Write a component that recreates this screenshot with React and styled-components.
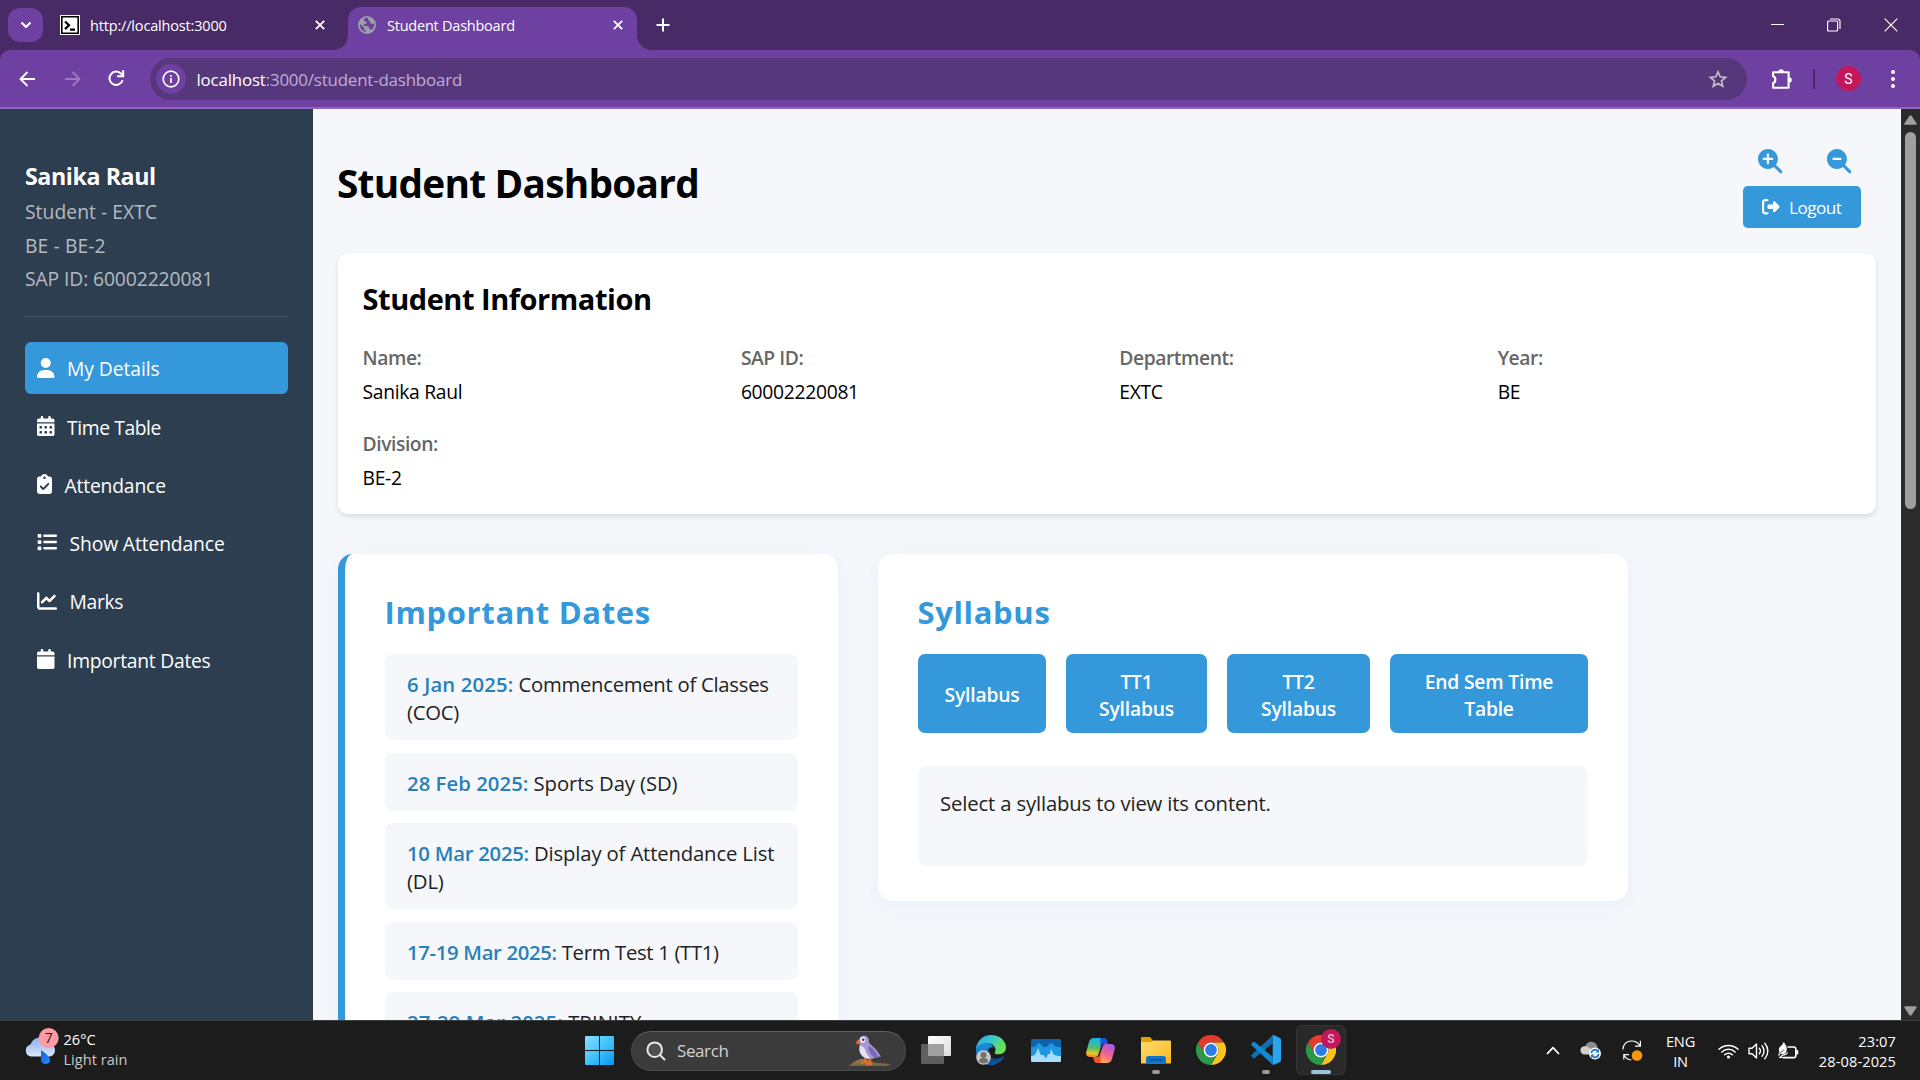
import React from "react";
import styled, { createGlobalStyle, css } from "styled-components";
import {
  FaUser,
  FaCalendarDays,
  FaClipboardCheck,
  FaList,
  FaChartLine,
  FaCalendar,
  FaMagnifyingGlassPlus,
  FaMagnifyingGlassMinus,
  FaRightFromBracket,
} from "react-icons/fa6";

const c = {
  frame: "#472a66",
  tab: "#6e40a1",
  omnibox: "#57377b",
  sidebar: "#2d3e50",
  page: "#f5f7fb",
  blue: "#3498db",
  deepBlue: "#2980b9",
};

const GlobalStyle = createGlobalStyle`
  *, *::before, *::after { box-sizing: border-box; }
  body {
    margin: 0;
    overflow: hidden;
    font-family: "Open Sans", "Noto Sans", sans-serif;
  }
  svg { display: block; flex: none; }
`;

const Screen = styled.div`
  width: 1920px;
  height: 1080px;
  display: flex;
  flex-direction: column;
  overflow: hidden;
  background: ${c.frame};
`;

/* ---------- browser chrome ---------- */

const TabStrip = styled.div`
  height: 50px;
  flex: none;
  display: flex;
  align-items: center;
  padding-left: 8px;
  color: #fff;
`;

const TabSearch = styled.div`
  width: 35px;
  height: 34px;
  border-radius: 12px;
  background: ${c.tab};
  display: grid;
  place-items: center;
`;

const Tab = styled.div`
  position: relative;
  height: 43px;
  margin-top: 7px;
  display: flex;
  align-items: center;
  padding: 0 14px 7px 10px;
  width: ${(p) => p.$width}px;
  margin-left: ${(p) => p.$gap}px;
  ${(p) =>
    p.$active &&
    css`
      background: ${c.tab};
      border-radius: 13px 13px 0 0;
      &::before,
      &::after {
        content: "";
        position: absolute;
        bottom: 0;
        width: 14px;
        height: 14px;
      }
      &::before {
        left: -14px;
        background: radial-gradient(circle at 0 0, transparent 13.5px, ${c.tab} 14px);
      }
      &::after {
        right: -14px;
        background: radial-gradient(circle at 100% 0, transparent 13.5px, ${c.tab} 14px);
      }
    `}
`;

const TabTitle = styled.span`
  flex: 1;
  margin-left: ${(p) => p.$indent}px;
  padding-top: 1px;
  font-size: 14.5px;
  line-height: 20px;
  letter-spacing: ${(p) => p.$track}px;
  white-space: nowrap;
`;

const NewTab = styled.div`
  margin-left: 19px;
`;

const WindowButtons = styled.div`
  margin-left: auto;
  display: flex;
  align-items: center;
  gap: 43px;
  padding-right: 22px;
`;

const Toolbar = styled.div`
  height: 59px;
  flex: none;
  display: flex;
  align-items: center;
  background: ${c.tab};
  border-radius: 10px 10px 0 0;
  border-bottom: 2px solid #8f66bd;
  color: #fff;
`;

const NavButtons = styled.div`
  width: 150px;
  flex: none;
  display: flex;
  gap: 25px;
  padding-left: 17px;
`;

const Omnibox = styled.div`
  width: 1597px;
  height: 42px;
  flex: none;
  display: flex;
  align-items: center;
  border-radius: 21px;
  background: ${c.omnibox};
  padding: 0 19px 0 6px;
`;

const SiteInfo = styled.div`
  width: 30px;
  height: 30px;
  border-radius: 50%;
  background: ${c.tab};
  display: grid;
  place-items: center;
`;

const Url = styled.span`
  flex: 1;
  margin-left: 10.5px;
  font-size: 16.9px;
  line-height: 24px;
  letter-spacing: -0.18px;
  color: #bfadd3;
  padding-top: 2px;
`;

const UrlHost = styled.span`
  color: #fff;
`;

const ToolbarActions = styled.div`
  flex: 1;
  display: flex;
  align-items: center;
  padding-left: 24px;
`;

const ToolbarDivider = styled.div`
  width: 2px;
  height: 20px;
  margin: 0 21px 0 19px;
  background: ${c.frame};
`;

const Avatar = styled.div`
  width: 25px;
  height: 25px;
  border-radius: 50%;
  background: #c2185b;
  font: 400 14px/26px Roboto, sans-serif;
  text-align: center;
  margin-right: 30px;
`;

/* ---------- page ---------- */

const Viewport = styled.div`
  flex: 1;
  min-height: 0;
  display: flex;
  overflow: hidden;
  background: ${c.page};
`;

const Sidebar = styled.aside`
  width: 313px;
  flex: none;
  padding: 51px 25px 0;
  background: ${c.sidebar};
`;

const Profile = styled.div`
  padding-bottom: 20.25px;
  border-bottom: 1px solid #42515f;
  margin-bottom: 25px;
`;

const ProfileName = styled.h3`
  margin: 0 0 3.25px;
  font-size: 23.2px;
  line-height: 32px;
  font-weight: 700;
  letter-spacing: -0.4px;
  color: #fff;
`;

const ProfileLine = styled.p`
  margin: 0;
  font-size: 19.3px;
  line-height: 33.5px;
  letter-spacing: ${(p) => p.$track}px;
  color: #b3bbc1;
`;

const Menu = styled.nav`
  display: flex;
  flex-direction: column;
  gap: 6.25px;
`;

const MenuItem = styled.a`
  height: 52px;
  display: flex;
  align-items: center;
  gap: 12.5px;
  padding-left: 12px;
  border-radius: 6px;
  background: ${(p) => (p.$active ? c.blue : "transparent")};
  color: #fff;
  font-size: 19.3px;
  letter-spacing: ${(p) => p.$track}px;
  svg {
    height: 20px;
    width: ${(p) => p.$icon}px;
    margin-bottom: 1px;
  }
  span {
    line-height: 28px;
    padding-top: 2.5px;
  }
`;

const Main = styled.main`
  width: 1588px;
  flex: none;
  padding: 29px 25px 0;
`;

const Header = styled.header`
  height: 90px;
  display: flex;
  justify-content: space-between;
  align-items: center;
  padding-right: 15px;
  margin-bottom: 25px;
`;

const PageTitle = styled.h1`
  margin: 0 0 0 -1px;
  font-size: 38.8px;
  line-height: 54px;
  font-weight: 700;
  letter-spacing: -0.75px;
  color: #000;
`;

const HeaderActions = styled.div`
  width: 118px;
  align-self: flex-start;
  padding-top: 11px;
`;

const ZoomControls = styled.div`
  display: flex;
  justify-content: space-between;
  padding: 0 10px 0 14.5px;
  margin-bottom: 13px;
  color: ${c.blue};
  font-size: 24.5px;
  height: 24px;
`;

const LogoutButton = styled.button`
  width: 118px;
  height: 42px;
  border: 0;
  border-radius: 5px;
  display: flex;
  align-items: center;
  gap: 9.5px;
  padding: 0 0 0 19px;
  background: ${c.blue};
  color: #fff;
  font-family: inherit;
  font-size: 17.2px;
  letter-spacing: -0.55px;
`;

const InfoCard = styled.section`
  height: 261px;
  padding: 25px 25px 25px 24.5px;
  border-radius: 10px;
  background: #fff;
  box-shadow: 0 2.5px 5px rgba(0, 0, 0, 0.1);
`;

const InfoTitle = styled.h2`
  margin: 0 0 24px;
  font-size: 29px;
  line-height: 42px;
  font-weight: 700;
  letter-spacing: -0.46px;
`;

const InfoGrid = styled.dl`
  margin: 0;
  display: grid;
  grid-template-columns: repeat(4, 1fr);
  gap: 25.5px 25px;
`;

const InfoItem = styled.div`
  font-size: 19.3px;
  line-height: 27px;
`;

const InfoLabel = styled.dt`
  font-weight: 600;
  color: #666;
  letter-spacing: -0.43px;
  margin-bottom: 6.5px;
`;

const InfoValue = styled.dd`
  margin: 0;
  color: #000;
  letter-spacing: -0.3px;
`;

const Panels = styled.div`
  display: flex;
  align-items: flex-start;
  gap: 40px;
  margin-top: 40px;
`;

const Panel = styled.section`
  width: ${(p) => p.$width}px;
  padding: 36px 40px 35px;
  border-left: ${(p) => (p.$accent ? `7px solid ${c.blue}` : "0")};
  border-radius: 15px;
  background: #fff;
  box-shadow: 0 5px 20px rgba(52, 152, 219, 0.07);
`;

const PanelTitle = styled.h2`
  margin: 0 0 20px -0.5px;
  font-size: 31px;
  line-height: 44px;
  font-weight: 700;
  letter-spacing: ${(p) => p.$track}px;
  color: ${c.blue};
`;

const DateItem = styled.div`
  margin-bottom: 12.5px;
  padding: 16px 12px 14px 22px;
  border-radius: 8px;
  background: ${c.page};
  color: #222;
  font-size: 20.3px;
  line-height: 28px;
  letter-spacing: ${(p) => p.$track}px;
`;

const DateLabel = styled.b`
  font-weight: 600;
  color: ${c.deepBlue};
  letter-spacing: ${(p) => p.$track}px;
`;

const SyllabusTabs = styled.div`
  display: grid;
  grid-template-columns: 128fr 141fr 143fr 198fr;
  gap: 20px;
`;

const SyllabusButton = styled.button`
  height: 79px;
  border: 0;
  border-radius: 7px;
  padding: 2px 20px 0;
  background: ${c.blue};
  color: #fff;
  font-family: inherit;
  font-size: 19.3px;
  font-weight: 600;
  line-height: 27px;
  letter-spacing: -0.2px;
`;

const SyllabusContent = styled.div`
  height: 100px;
  margin-top: 33px;
  padding: 23px 22px;
  border-radius: 8px;
  background: ${c.page};
  color: #222;
  font-size: 20.3px;
  line-height: 28px;
  letter-spacing: -0.15px;
`;

const ScrollTrack = styled.div`
  width: 19px;
  flex: none;
  display: flex;
  flex-direction: column;
  align-items: center;
  padding: 6px 0 4px;
  background: #2b2b2b;
`;

const ScrollThumb = styled.div`
  width: 11px;
  height: 377px;
  margin: 7px 0 auto;
  border-radius: 6px;
  background: #9f9f9f;
`;

/* ---------- taskbar ---------- */

const Taskbar = styled.footer`
  height: 60px;
  flex: none;
  display: flex;
  align-items: stretch;
  background: #1c1c1c;
  border-top: 1px solid #3e3e3e;
  color: #fff;
`;

const Weather = styled.div`
  width: 572px;
  flex: none;
  display: flex;
  gap: 3.5px;
  padding: 5px 0 0 24px;
`;

const WeatherText = styled.div`
  padding-top: 3px;
  font-size: 14.6px;
  line-height: 20px;
  color: #fff;
  span {
    display: block;
    color: #c8c8c8;
  }
`;

const TaskCell = styled.div`
  position: relative;
  width: 55px;
  display: grid;
  place-items: center;
  padding-bottom: 1px;
`;

const ActiveTile = styled.div`
  width: 50px;
  height: 50px;
  border-radius: 6px;
  border: 1px solid #363636;
  background: #292929;
  display: grid;
  place-items: center;
`;

const RunningMark = styled.i`
  position: absolute;
  bottom: 6px;
  left: 50%;
  transform: translateX(-50%);
  height: 4px;
  border-radius: 2px;
  width: ${(p) => (p.$active ? 20 : 8)}px;
  background: ${(p) => (p.$active ? "#98c5dc" : "#9a9a9a")};
`;

const ProfileBadge = styled.div`
  position: absolute;
  left: 28px;
  top: 8px;
  width: 20px;
  height: 20px;
  border-radius: 50%;
  background: #c2185b;
  color: #f3b9cf;
  font: 500 12px/20px Roboto, sans-serif;
  text-align: center;
`;

const SearchBox = styled.div`
  width: 275px;
  height: 40px;
  align-self: center;
  margin: 0 2px 0 4px;
  display: flex;
  align-items: center;
  padding: 0 13px 0 14px;
  border-radius: 20px;
  background: #3b3b3b;
  border: 1px solid #4a4a4a;
  border-top-color: #5e5e5e;
`;

const SearchLabel = styled.span`
  flex: 1;
  margin-left: 11px;
  font-size: 17px;
  letter-spacing: -0.4px;
  color: #d2d2d2;
`;

const Tray = styled.div`
  margin-left: auto;
  display: flex;
  align-items: center;
  padding-right: 24px;
`;

const TrayIcons = styled.div`
  display: flex;
  align-items: center;
  gap: ${(p) => p.$gap}px;
`;

const TrayText = styled.div`
  width: ${(p) => p.$width}px;
  font-size: 14.6px;
  line-height: 20px;
  text-align: ${(p) => p.$align};
  letter-spacing: ${(p) => p.$track}px;
`;

/* ---------- drawings ---------- */

const Line = ({ w = 20, h = w, box, sw = 2, d, color = "currentColor", cap = "butt", children }) => (
  <svg width={w} height={h} viewBox={box || `0 0 ${w} ${h}`} fill="none" stroke={color} strokeWidth={sw} strokeLinecap={cap} strokeLinejoin="round">
    {d && <path d={d} />}
    {children}
  </svg>
);

const CloseX = () => <Line w={10} sw={1.8} d="M.8.8l8.400 8.400M9.200.8L.8 9.200" />;

const Terminal = () => (
  <svg width="20" height="20" viewBox="0 0 20 20">
    <path fill="#fff" d="M0 0h20v20H0z" />
    <path fill="none" stroke="#000" strokeWidth="1.6" d="M1.8 1.8h16.4v16.4H1.8z" />
    <path fill="none" stroke="#000" strokeWidth="2.2" d="M5 6.5l4 3.8-4 3.8M10 14.6h5" />
  </svg>
);

const Globe = () => (
  <svg width="18" height="18" viewBox="0 0 18 18">
    <circle cx="9" cy="9" r="9" fill="#9aa0a6" />
    <path
      fill={c.tab}
      d="M10.2 1.8c-1.300-.2-2.700 0-3.900.6l-.4 1.700c0 .8.7 1.500 1.600 1.500h.9v1.700c0 .5-.4.900-.9.900H5.700v1.800h3.900c.7 0 1.300.6 1.300 1.300v1.700h.7c.8 0 1.500.5 1.700 1.200 1.800-1.500 2.900-3.500 2.900-5.700 0-.6-.1-1.100-.2-1.600-.8.800-1.700 1-2.600.8-.9-.2-1.300-1-1.300-1.900 0-.7-.5-1.200-1.200-1.200l-.8-.1zM1.900 7.700c-.5 3.700 2 7.400 5.800 8.300v-1.600c-1 0-1.700-.8-1.700-1.700v-.900z"
    />
  </svg>
);

const Reload = () => (
  <svg width="19" height="19" viewBox="0 0 19 19" fill="none" stroke="currentColor" strokeWidth="2">
    <path d="M15.600 11.200A6.700 6.700 0 1 1 14.300 4.900L16 6.700" />
    <path fill="currentColor" stroke="none" d="M17.200 1.200v7.100h-7.100V6.200h5V1.200z" />
  </svg>
);

const Puzzle = () => (
  <svg width="23" height="22" viewBox="0 0 23 22" fill="none" stroke="currentColor" strokeWidth="2.100" strokeLinejoin="round">
    <path d="M2.100 4.200h15.500v15.500H2.100v-4.600c3-.9 3-6 0-6.900z" />
    <path fill="currentColor" stroke="none" d="M7.300 4a2.800 2.800 0 0 1 5.600 0zM18 9.200a2.800 2.800 0 0 1 0 5.600z" />
  </svg>
);

const CloudRain = () => (
  <svg width="36" height="44" viewBox="0 0 36 44">
    <defs>
      <linearGradient id="cloud" x1="0" y1="0" x2="0" y2="1">
        <stop offset="0" stopColor="#8fb1ee" />
        <stop offset="1" stopColor="#d9e6fb" />
      </linearGradient>
      <linearGradient id="drop" x1="0" y1="0" x2="1" y2="1">
        <stop offset="0" stopColor="#1f5fd6" />
        <stop offset="1" stopColor="#1c8dff" />
      </linearGradient>
    </defs>
    <path fill="url(#cloud)" d="M7 30.500a6 6 0 0 1-.5-11.800C8.500 13 13 11 17 11.500c5 .3 7 3.500 8 6.500 4 .3 6 3 6 6.200 0 3.500-2.500 6.300-6 6.300z" />
    <path fill="none" stroke="#a3bdee" strokeWidth="1.200" d="M6.500 18.900c4-.8 7 1.100 8 3.600" />
    <path fill="url(#drop)" d="M17 24c4 3 9 6.500 9 10.200 0 2.600-2 3.800-4.500 3.800S17 36.500 17 34z" />
    <circle cx="24.700" cy="12" r="10" fill="#ff99a4" />
    <text x="24.700" y="17" textAnchor="middle" fontSize="14" fill="#1c1c1c">7</text>
  </svg>
);

const WindowsLogo = () => (
  <svg width="29" height="29" viewBox="0 0 29 29">
    <defs>
      <linearGradient id="win" x1="0" y1="0" x2="1" y2="1">
        <stop offset="0" stopColor="#8adffc" />
        <stop offset=".5" stopColor="#40c4fb" />
        <stop offset="1" stopColor="#0a93f8" />
      </linearGradient>
    </defs>
    <path fill="url(#win)" d="M1 0h13v14H0V1a1 1 0 0 1 1-1zM15 0h13a1 1 0 0 1 1 1v13H15zM0 15h14v14H1a1 1 0 0 1-1-1zM15 15h14v13a1 1 0 0 1-1 1H15z" />
  </svg>
);

const Puffin = () => (
  <svg width="44" height="32" viewBox="0 0 44 32">
    <defs>
      <linearGradient id="rock" x1="0" y1="0" x2="0" y2="1">
        <stop offset="0" stopColor="#94814f" />
        <stop offset="1" stopColor="#7a643c" />
      </linearGradient>
    </defs>
    <path fill="url(#rock)" d="M.5 31C4 28.500 8 24.500 14 24c6-.3 9 2.500 13 3.800 5 .7 12 .4 15.500 1.700-2 1-4 1.500-7 1.500z" />
    <path fill="#a397d6" d="M11 6c0-3.500 2.500-5.300 5.200-5.300C19.500.7 21 3 20.800 6.500 21 9 25 11 28 14.500c2 2.500 3.500 5 5 7-2.500 1.200-4.500 1-6 1-2.500 2-6 2.200-9 1-5.500-2.200-7.500-7-6.500-12 .3-2-.5-3.500-.5-5.500z" />
    <path fill="#e6e2f4" d="M12 10.500c3 .5 5 2.500 5.500 5 .5 3 2.500 5.500 5 8-3 .6-6-.5-8-2.500-3-3-3.500-7-2.500-10.500z" />
    <path fill="#7867b4" d="M20.500 11c4 1.500 7 5.500 9 9.500l3.500 1-6 1c-4-2-6.500-6-6.500-11.500z" />
    <ellipse cx="14.800" cy="4.800" rx="2.700" ry="3" fill="#efeaf7" />
    <circle cx="15.200" cy="4.800" r="1.300" fill="#6a2a38" />
    <path fill="#e0532a" d="M12 4C9.500 4.200 7.800 6 7.600 9.500c2 0 3.400-.6 4.400-2z" />
    <path fill="#f49a4a" d="M11 4.500L9.800 8.600l1.700-1z" />
    <path fill="none" stroke="#ef6a26" strokeWidth="2" strokeLinecap="round" d="M17 24v2.500l-3 1.500M17 26.500l2 1.500M21.500 24l1 3-3 3M22.500 27l.5 2.500" />
  </svg>
);

const TaskView = () => (
  <svg width="30" height="28" viewBox="0 0 30 28">
    <defs>
      <linearGradient id="tv" x1="0" y1="0" x2="1" y2="1">
        <stop offset="0" stopColor="#fff" />
        <stop offset="1" stopColor="#dcdcdc" />
      </linearGradient>
    </defs>
    <rect x="7" y="0" width="23" height="20" rx="1" fill="url(#tv)" />
    <rect x="0" y="8" width="23" height="20" rx="1" fill="#5f5f5f" />
    <path fill="#a0a0a0" d="M7 8h16v12H7z" />
  </svg>
);

const Edge = () => (
  <svg width="30" height="30" viewBox="0 0 30 30">
    <defs>
      <linearGradient id="edgeTop" x1="0" y1="0" x2="1" y2=".4">
        <stop offset="0" stopColor="#2fa8e2" />
        <stop offset=".5" stopColor="#35c6d4" />
        <stop offset="1" stopColor="#6be04f" />
      </linearGradient>
      <linearGradient id="edgeMid" x1="0" y1="0" x2="0" y2="1">
        <stop offset="0" stopColor="#1a8fdc" />
        <stop offset="1" stopColor="#0d6cc4" />
      </linearGradient>
    </defs>
    <path fill="url(#edgeMid)" d="M0 15C0 9.500 4 7 8.500 7c5 0 8.500 3.500 8.500 6-3-1.500-5.500 1-5 4.500.5 5 5 8.500 11 8l-3 3.500C17 30.500 13 30 11 29.500 4 28 0 22 0 15z" />
    <path fill="#0d4f98" d="M12 17c0 4 4 7.500 9 6.500 2.500-.3 4.500-1.300 6-2 .8-.4 1.400.2.9 1C26 26 20.500 30 15 30c-4-1-6-6-3-13z" />
    <path fill="url(#edgeTop)" d="M0 14C.8 6 7 0 15 0c9 0 15 6 15 12.500 0 4.200-3 6.700-7.500 6.700-3 0-4.500-.8-3.800-1.800 1.300-2 1-4-.5-6C15 7 5 5.500 0 14z" />
    <circle cx="7.500" cy="22.500" r="7.300" fill="#c9c7c5" />
    <circle cx="7.500" cy="20" r="3" fill="#73716f" />
    <path fill="#73716f" d="M2.800 26.500c.3-3 2-3.500 4.700-3.500s4.400.5 4.700 3.500c-2 2.500-7 2.500-9.400 0z" />
  </svg>
);

const Monitor = () => (
  <svg width="30" height="23" viewBox="0 0 30 23">
    <rect width="30" height="23" rx="1" fill="#0f62ae" />
    <path fill="#1f96e0" d="M0 8h3c2 0 3-4 5-4s3 4 5 4h2c2 0 3-4 5-4s4 4 6 4h4v13H0z" />
    <path fill="#a5defa" d="M0 17c3 0 4-1 5-3l2-5c1 1 2 7 3 7h2c1 0 2 3 3 3s1-4 3-4h1l1-5c1 1 2 6 4 6 2 1 4 1 6 1v5a1 1 0 0 1-1 1H1a1 1 0 0 1-1-1z" />
  </svg>
);

const Copilot = () => (
  <svg width="29" height="25" viewBox="0 0 29 25">
    <defs>
      <linearGradient id="cpA" x1=".3" y1="0" x2=".2" y2="1">
        <stop offset="0" stopColor="#1ab2ea" />
        <stop offset=".5" stopColor="#4fbf70" />
        <stop offset=".8" stopColor="#e8c81c" />
        <stop offset="1" stopColor="#f07a30" />
      </linearGradient>
      <linearGradient id="cpB" x1=".8" y1="0" x2=".3" y2="1">
        <stop offset="0" stopColor="#a45cf0" />
        <stop offset=".5" stopColor="#ec5f95" />
        <stop offset="1" stopColor="#ffb04d" />
      </linearGradient>
    </defs>
    <path fill="url(#cpA)" d="M8 0h10l-5.500 16c-.6 2-1.500 3-3.500 3H4c-3 0-4.500-2-3.600-5.500L3 4c.8-2.800 2.500-4 5-4z" />
    <path fill="#1b55d8" d="M14.500 0H18c2 0 2.500 1.200 3.200 3l1 3h-4c-2 0-3 .8-3.600 2.700L14 10z" />
    <path fill="url(#cpB)" d="M21 25H11l5.500-16c.6-2 1.500-3 3.500-3h5c3 0 4.500 2 3.600 5.500L26 21c-.8 2.800-2.500 4-5 4z" />
    <path fill="#f0562f" d="M14.500 25H11c-2 0-2.500-1.200-3.200-3l-1-3h4c2 0 3-.8 3.600-2.700L15 15z" />
  </svg>
);

const Folder = () => (
  <svg width="30" height="27" viewBox="0 0 30 27">
    <defs>
      <linearGradient id="fold" x1="0" y1="0" x2="1" y2="1">
        <stop offset="0" stopColor="#ffdd70" />
        <stop offset="1" stopColor="#f9b81c" />
      </linearGradient>
    </defs>
    <path fill="#dfa000" d="M0 1a1 1 0 0 1 1-1h8l3 3.200V6H0z" />
    <path fill="url(#fold)" d="M0 5h10l2.500-1.500H29a1 1 0 0 1 1 1V26a.6.6 0 0 1-.6.6H.600A.6.6 0 0 1 0 26z" />
    <path fill="#0f74c8" d="M5 21.500a2.500 2.500 0 0 1 2.500-2.500h15a2.500 2.500 0 0 1 2.500 2.500v5.100H5z" />
    <path stroke="#0b4f94" strokeWidth="1.400" d="M8.500 22.800h13" />
  </svg>
);

const Chrome = () => (
  <svg width="30" height="30" viewBox="0 0 30 30">
    <path fill="#e33b2e" d="M2 7.500A15 15 0 0 1 28 7.500H15a7.500 7.500 0 0 0-6.500 11.200z" />
    <path fill="#fcc31e" d="M28 7.500A15 15 0 0 1 15 30l6.500-11.200A7.500 7.500 0 0 0 15 7.500z" />
    <path fill="#2a9a49" d="M15 30A15 15 0 0 1 2 7.500l6.500 11.200a7.500 7.500 0 0 0 13 0z" />
    <circle cx="15" cy="15" r="7.500" fill="#fff" />
    <circle cx="15" cy="15" r="5.900" fill="#2f7be8" />
  </svg>
);

const VsCode = () => (
  <svg width="30" height="30" viewBox="0 0 30 30">
    <path fill="#0a72b5" d="M21.700.3v7.900L3.700 22.900a1.300 1.300 0 0 1-1.600 0L.6 21.600a1.300 1.300 0 0 1 0-1.900z" />
    <path fill="#0f8ad2" d="M21.700 29.700v-7.900L3.700 7.100a1.300 1.300 0 0 0-1.600 0L.6 8.400a1.300 1.300 0 0 0 0 1.900z" />
    <path fill="#2aa4ee" d="M21.700 29.800c.5.200.9.200 1.400 0l5.800-2.700c.7-.4 1.100-1 1.100-1.700V4.600c0-.7-.4-1.400-1.100-1.700L23.100.200c-.5-.2-1-.2-1.400 0z" />
  </svg>
);

const OneDrive = () => (
  <svg width="22" height="19" viewBox="0 0 22 19">
    <path fill="#8d8d8d" d="M5 6c1-4 4-5.500 7-5.200 3.500.3 5 3 5.500 5.200l1 5H8z" />
    <path fill="#d0d0d0" d="M4 13.500a4.200 4.200 0 0 1 0-8.300c3-.3 5 1 7 3l5 4-4 1.300z" />
    <circle cx="15" cy="12.500" r="6" fill="#fff" />
    <path fill="none" stroke="#1e74c9" strokeWidth="1.800" d="M11.300 12a3.800 3.800 0 0 1 6.600-2M18.700 13a3.800 3.800 0 0 1-6.600 2" />
    <path fill="#1e74c9" d="M19 8v3.500h-3.500zM11 17v-3.500h3.500z" />
  </svg>
);

const Sync = () => (
  <svg width="21" height="21" viewBox="0 0 21 21" fill="none" stroke="#fff" strokeWidth="1.200">
    <path d="M.8 9.500C1.500 4 5 1 9.500 1c4 0 7 2 8.700 5M18.400.8v5.400H13" />
    <path d="M1.800 19.500v-4.800H7M1.800 15c1.500 2.800 4 4.600 7.500 5" />
    <circle cx="15" cy="15.500" r="5.300" fill="#ff9800" stroke="none" />
  </svg>
);

const Wifi = () => (
  <svg width="21" height="16" viewBox="0 0 21 16" fill="none" stroke="#fff" strokeWidth="1.500" strokeLinecap="round">
    <path d="M1 6.300a13.500 13.500 0 0 1 19 0M3.900 9a9.500 9.500 0 0 1 13.200 0M6.700 11.700a5.500 5.500 0 0 1 7.600 0" />
    <circle cx="10.500" cy="14" r="1.600" fill="#fff" stroke="none" />
  </svg>
);

const Volume = () => (
  <svg width="21" height="18" viewBox="0 0 21 18" fill="none" stroke="#fff" strokeWidth="1.400" strokeLinejoin="round" strokeLinecap="round">
    <path d="M1 6.300h3L8.500 2v14L4 11.700H1zM11.300 6.300c1.300 1.500 1.300 3.900 0 5.400M14 3.700c2.700 3 2.700 7.600 0 10.600M16.800 1.300c4 4.500 4 10.900 0 15.400" />
  </svg>
);

const Battery = () => (
  <svg width="21" height="18" viewBox="0 0 21 18" fill="none">
    <path stroke="#fff" strokeWidth="1.600" d="M9.500 5h6.500a1.800 1.800 0 0 1 1.800 1.800v7a1.800 1.800 0 0 1-1.800 1.800H4.500" />
    <path fill="#fff" d="M18.300 8h1a1 1 0 0 1 1 1v2.600a1 1 0 0 1-1 1h-1z" />
    <path fill="#fff" d="M5.800 0C7 2 8.800 3.500 8.800 7c0 3-1.500 5-4 5H2.500L.5 14.500v-2.800L1.500 10C-.5 6 2.500 4.500 4 3z" />
    <path stroke="#1c1c1c" strokeWidth=".9" d="M1.500 12L6 7.500" />
    <path stroke="#fff" strokeWidth="1.200" d="M9.500 10.500c-1 2-2.500 2.500-5 2.600L2 15.500h3" />
  </svg>
);

/* ---------- data ---------- */

const menu = [
  { label: "My Details", icon: FaUser, width: 17.5, track: -0.06, active: true },
  { label: "Time Table", icon: FaCalendarDays, width: 17.5, track: -0.4 },
  { label: "Attendance", icon: FaClipboardCheck, width: 15, track: -0.17 },
  { label: "Show Attendance", icon: FaList, width: 20, track: -0.12 },
  { label: "Marks", icon: FaChartLine, width: 20, track: -0.3 },
  { label: "Important Dates", icon: FaCalendar, width: 17.5, track: -0.26 },
];

const details = [
  ["Name:", "Sanika Raul"],
  ["SAP ID:", "60002220081"],
  ["Department:", "EXTC"],
  ["Year:", "BE"],
  ["Division:", "BE-2"],
];

const dates = [
  { date: "6 Jan 2025:", text: "Commencement of Classes (COC)", labelTrack: 0.15, track: -0.27 },
  { date: "28 Feb 2025:", text: "Sports Day (SD)", labelTrack: 0.05, track: -0.1 },
  { date: "10 Mar 2025:", text: "Display of Attendance List (DL)", labelTrack: -0.25, track: -0.15 },
  { date: "17-19 Mar 2025:", text: "Term Test 1 (TT1)", labelTrack: -0.32, track: -0.32 },
  { date: "27-29 Mar 2025:", text: "TRINITY", labelTrack: 0.08, track: 0.05 },
];

const syllabi = ["Syllabus", "TT1 Syllabus", "TT2 Syllabus", "End Sem Time Table"];

export default function App() {
  return (
    <Screen>
      <GlobalStyle />
      <TabStrip>
        <TabSearch>
          <Line w={12} h={8} sw={2.2} d="M1.500 1.500L6 6l4.500-4.500" />
        </TabSearch>
        <Tab $width={289} $gap={7}>
          <Terminal />
          <TabTitle $indent={10} $track={-0.17}>http://localhost:3000</TabTitle>
          <CloseX />
        </Tab>
        <Tab $active $width={289} $gap={9}>
          <Globe />
          <TabTitle $indent={11} $track={-0.23}>Student Dashboard</TabTitle>
          <CloseX />
        </Tab>
        <NewTab>
          <Line w={14} d="M7 .5v13M.5 7h13" />
        </NewTab>
        <WindowButtons>
          <Line w={13} sw={1} d="M0 5.500h13" />
          <Line w={14} sw={1.200}>
            <rect x=".6" y="3" width="10" height="10" rx="1" />
            <path d="M3 1h7.500a2.500 2.500 0 0 1 2.500 2.500V11" />
          </Line>
          <Line w={14} sw={1.200} d="M.7.7l12.600 12.600M13.300.7L.7 13.300" />
        </WindowButtons>
      </TabStrip>

      <Toolbar>
        <NavButtons>
          <Line w={20} sw={1.8} d="M10.500 3L3.500 10l7 7M3.500 10H18" />
          <Line w={20} h={20} sw={1.8} color="#9a7bbf" d="M10.500 3l7 7-7 7M17.500 10H3" />
          <Reload />
        </NavButtons>
        <Omnibox>
          <SiteInfo>
            <Line w={18} sw={1.700}>
              <circle cx="9" cy="9" r="7.800" />
              <path d="M9 8v5M9 5v1.800" />
            </Line>
          </SiteInfo>
          <Url>
            <UrlHost>localhost</UrlHost>:3000/student-dashboard
          </Url>
          <Line w={20} sw={1.700} color="#c4bccb">
            <path strokeLinejoin="miter" d="M10 2.800l2.200 5 5.400.5-4.100 3.600 1.200 5.300L10 14.400l-4.700 2.800 1.200-5.300-4.100-3.600 5.400-.5z" />
          </Line>
        </Omnibox>
        <ToolbarActions>
          <Puzzle />
          <ToolbarDivider />
          <Avatar>S</Avatar>
          <svg width="4" height="20" viewBox="0 0 4 20" fill="#fff">
            <circle cx="2" cy="3" r="2" />
            <circle cx="2" cy="10" r="2" />
            <circle cx="2" cy="17" r="2" />
          </svg>
        </ToolbarActions>
      </Toolbar>

      <Viewport>
        <Sidebar>
          <Profile>
            <ProfileName>Sanika Raul</ProfileName>
            <ProfileLine $track={0.05}>Student - EXTC</ProfileLine>
            <ProfileLine $track={0.1}>BE - BE-2</ProfileLine>
            <ProfileLine $track={-0.1}>SAP ID: 60002220081</ProfileLine>
          </Profile>
          <Menu>
            {menu.map(({ label, icon: Icon, width, track, active }) => (
              <MenuItem key={label} $icon={width} $track={track} $active={active}>
                <Icon />
                <span>{label}</span>
              </MenuItem>
            ))}
          </Menu>
        </Sidebar>

        <Main>
          <Header>
            <PageTitle>Student Dashboard</PageTitle>
            <HeaderActions>
              <ZoomControls>
                <FaMagnifyingGlassPlus />
                <FaMagnifyingGlassMinus />
              </ZoomControls>
              <LogoutButton>
                <FaRightFromBracket size={17.5} />
                Logout
              </LogoutButton>
            </HeaderActions>
          </Header>

          <InfoCard>
            <InfoTitle>Student Information</InfoTitle>
            <InfoGrid>
              {details.map(([label, value]) => (
                <InfoItem key={label}>
                  <InfoLabel>{label}</InfoLabel>
                  <InfoValue>{value}</InfoValue>
                </InfoItem>
              ))}
            </InfoGrid>
          </InfoCard>

          <Panels>
            <Panel $accent $width={500}>
              <PanelTitle $track={0.65}>Important Dates</PanelTitle>
              {dates.map((d) => (
                <DateItem key={d.date} $track={d.track}>
                  <DateLabel $track={d.labelTrack}>{d.date}</DateLabel> {d.text}
                </DateItem>
              ))}
            </Panel>
            <Panel $width={750}>
              <PanelTitle $track={0.65}>Syllabus</PanelTitle>
              <SyllabusTabs>
                {syllabi.map((s) => (
                  <SyllabusButton key={s}>{s}</SyllabusButton>
                ))}
              </SyllabusTabs>
              <SyllabusContent>Select a syllabus to view its content.</SyllabusContent>
            </Panel>
          </Panels>
        </Main>

        <ScrollTrack>
          <svg width="13" height="10" viewBox="0 0 13 10" fill="#9f9f9f">
            <path d="M5.300 1a1.500 1.500 0 0 1 2.400 0l4.800 7.300c.4.800 0 1.500-.8 1.500H1.300C.5 9.800.1 9.100.5 8.300z" />
          </svg>
          <ScrollThumb />
          <svg width="13" height="10" viewBox="0 0 13 10" fill="#9f9f9f">
            <path d="M5.300 9a1.500 1.500 0 0 0 2.400 0l4.800-7.300c.4-.8 0-1.500-.8-1.500H1.300C.5.200.1.900.5 1.700z" />
          </svg>
        </ScrollTrack>
      </Viewport>

      <Taskbar>
        <Weather>
          <CloudRain />
          <WeatherText>
            26°C<span>Light rain</span>
          </WeatherText>
        </Weather>
        <TaskCell>
          <WindowsLogo />
        </TaskCell>
        <SearchBox>
          <svg width="20" height="20" viewBox="0 0 20 20" fill="none" stroke="#e8e8e8" strokeWidth="2" strokeLinecap="round">
            <circle cx="8.700" cy="8.700" r="7.300" fill="#505050" />
            <path d="M14 14l4.500 4.500" />
          </svg>
          <SearchLabel>Search</SearchLabel>
          <Puffin />
        </SearchBox>
        <TaskCell>
          <TaskView />
        </TaskCell>
        <TaskCell>
          <Edge />
        </TaskCell>
        <TaskCell>
          <Monitor />
        </TaskCell>
        <TaskCell>
          <Copilot />
        </TaskCell>
        <TaskCell>
          <Folder />
          <RunningMark />
        </TaskCell>
        <TaskCell>
          <Chrome />
        </TaskCell>
        <TaskCell>
          <VsCode />
          <RunningMark />
        </TaskCell>
        <TaskCell>
          <ActiveTile>
            <Chrome />
          </ActiveTile>
          <ProfileBadge>S</ProfileBadge>
          <RunningMark $active />
        </TaskCell>
        <Tray>
          <TrayIcons $gap={20}>
            <Line w={14} h={9} sw={1.800} d="M1 8l6-6.300L13 8" />
            <OneDrive />
            <Sync />
          </TrayIcons>
          <TrayText $width={75} $align="center" $track={-0.2}>
            ENG
            <br />
            IN
          </TrayText>
          <TrayIcons $gap={9}>
            <Wifi />
            <Volume />
            <Battery />
          </TrayIcons>
          <TrayText $width={97} $align="right" $track={0.1}>
            23:07
            <br />
            28-08-2025
          </TrayText>
        </Tray>
      </Taskbar>
    </Screen>
  );
}
